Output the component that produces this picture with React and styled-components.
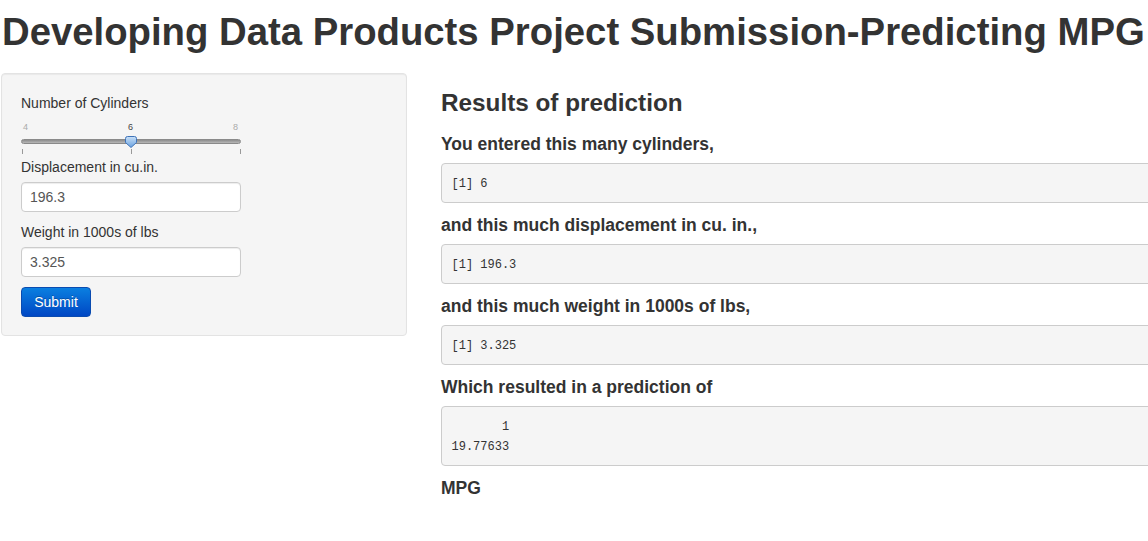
import React from "react";
import styled, { createGlobalStyle } from "styled-components";

const GlobalStyle = createGlobalStyle`
  html, body {
    margin: 0;
    padding: 0;
    background: #fff;
    overflow: hidden;
  }
  body {
    font-family: "Liberation Sans", Arial, sans-serif;
    font-size: 14px;
    color: #333;
  }
`;

const Page = styled.div`
  width: 1300px;
  padding: 0 0 0 1px;
`;

const Title = styled.h1`
  margin: 0;
  padding: 10px 0 0 1px;
  height: 64px;
  box-sizing: border-box;
  font-size: 38.3px;
  font-weight: bold;
  line-height: 44px;
  color: #333;
  white-space: nowrap;
`;

const Row = styled.div`
  display: flex;
  align-items: flex-start;
  gap: 34px;
  margin-top: 9px;
`;

const Well = styled.div`
  width: 406px;
  box-sizing: border-box;
  padding: 19px 19px 18px;
  background: #f5f5f5;
  border: 1px solid #e3e3e3;
  border-radius: 4px;
  box-shadow: inset 0 1px 1px rgba(0, 0, 0, 0.05);
`;

const Label = styled.label`
  display: block;
  font-size: 14px;
  line-height: 20px;
  color: #333;
  margin-bottom: ${(p) => (p.$mb === undefined ? 5 : p.$mb)}px;
`;

const Field = styled.div`
  margin-bottom: ${(p) => (p.$mb === undefined ? 10 : p.$mb)}px;
`;

const Input = styled.input`
  display: block;
  width: 220px;
  height: 30px;
  box-sizing: border-box;
  padding: 4px 8px;
  font-family: "Liberation Sans", Arial, sans-serif;
  font-size: 14px;
  color: #555;
  background: #fff;
  border: 1px solid #ccc;
  border-radius: 4px;
  box-shadow: inset 0 1px 1px rgba(0, 0, 0, 0.075);
  outline: none;
`;

const Slider = styled.div`
  width: 220px;
  position: relative;
`;

const Scale = styled.div`
  display: flex;
  justify-content: space-between;
  font-size: 9px;
  line-height: 10px;
  height: 10px;
  padding: 0 3px 0 2px;
`;

const ScaleNum = styled.span`
  color: ${(p) => (p.$active ? "#444" : "#aaa")};
`;

const Track = styled.div`
  margin-top: 7px;
  height: 5px;
  border-radius: 3px;
  background: linear-gradient(#8c8c8c, #b8b8b8);
  border: 1px solid #8a8a8a;
  box-sizing: border-box;
`;

const Ticks = styled.div`
  display: flex;
  justify-content: space-between;
  margin-top: 5px;
  padding: 0 0.5px;
  height: 5px;
`;

const Tick = styled.span`
  width: 1px;
  height: 5px;
  background: #999;
`;

const Handle = styled.svg`
  position: absolute;
  left: 104px;
  top: 14px;
`;

const SubmitButton = styled.button`
  display: block;
  width: 70px;
  height: 30px;
  padding: 0;
  font-family: "Liberation Sans", Arial, sans-serif;
  font-size: 14px;
  color: #fff;
  text-shadow: 0 -1px 0 rgba(0, 0, 0, 0.25);
  background: linear-gradient(#0a7fe0, #0047c4);
  border: 1px solid #0a4bb0;
  border-radius: 4px;
`;

const Main = styled.div`
  width: 842px;
  padding-top: 16px;
`;

const Heading3 = styled.h3`
  margin: 0 0 18px;
  font-size: 24.3px;
  line-height: 27px;
  font-weight: bold;
  color: #333;
`;

const Heading4 = styled.h4`
  margin: 0 0 8px;
  font-size: 17.5px;
  line-height: 21px;
  font-weight: bold;
  color: #333;
`;

const Pre = styled.pre`
  margin: 0 0 12px;
  padding: 10px 9.5px 8px;
  font-family: "Liberation Mono", "Courier New", monospace;
  font-size: 12px;
  line-height: 20px;
  color: #333;
  background: #f5f5f5;
  border: 1px solid #ccc;
  border-radius: 4px;
  white-space: pre;
`;

const results = [
  { heading: "You entered this many cylinders,", out: "[1] 6" },
  { heading: "and this much displacement in cu. in.,", out: "[1] 196.3" },
  { heading: "and this much weight in 1000s of lbs,", out: "[1] 3.325" },
  { heading: "Which resulted in a prediction of", out: "       1 \n19.77633 " },
];

export default function App() {
  return (
    <Page>
      <GlobalStyle />
      <Title>Developing Data Products Project Submission-Predicting MPG</Title>
      <Row>
        <Well>
          <Label $mb={9}>Number of Cylinders</Label>
          <Field $mb={3}>
            <Slider>
              <Scale>
                <ScaleNum>4</ScaleNum>
                <ScaleNum $active>6</ScaleNum>
                <ScaleNum>8</ScaleNum>
              </Scale>
              <Track />
              <Ticks>
                <Tick />
                <Tick />
                <Tick />
              </Ticks>
              <Handle width="12" height="12" viewBox="0 0 12 12">
                <defs>
                  <linearGradient id="hg" x1="0" y1="0" x2="0" y2="1">
                    <stop offset="0" stopColor="#c9e0f7" />
                    <stop offset="1" stopColor="#6aa2e0" />
                  </linearGradient>
                </defs>
                <path
                  d="M2.5 0.5 H9.5 Q11.5 0.5 11.5 2.5 V6.5 L6 11.5 L0.5 6.5 V2.5 Q0.5 0.5 2.5 0.5 Z"
                  fill="url(#hg)"
                  stroke="#3f73b8"
                  strokeWidth="1"
                />
              </Handle>
            </Slider>
          </Field>
          <Field>
            <Label>Displacement in cu.in.</Label>
            <Input defaultValue="196.3" />
          </Field>
          <Field>
            <Label>Weight in 1000s of lbs</Label>
            <Input defaultValue="3.325" />
          </Field>
          <SubmitButton>Submit</SubmitButton>
        </Well>
        <Main>
          <Heading3>Results of prediction</Heading3>
          {results.map((r) => (
            <div key={r.heading}>
              <Heading4>{r.heading}</Heading4>
              <Pre>{r.out}</Pre>
            </div>
          ))}
          <Heading4>MPG</Heading4>
        </Main>
      </Row>
    </Page>
  );
}
